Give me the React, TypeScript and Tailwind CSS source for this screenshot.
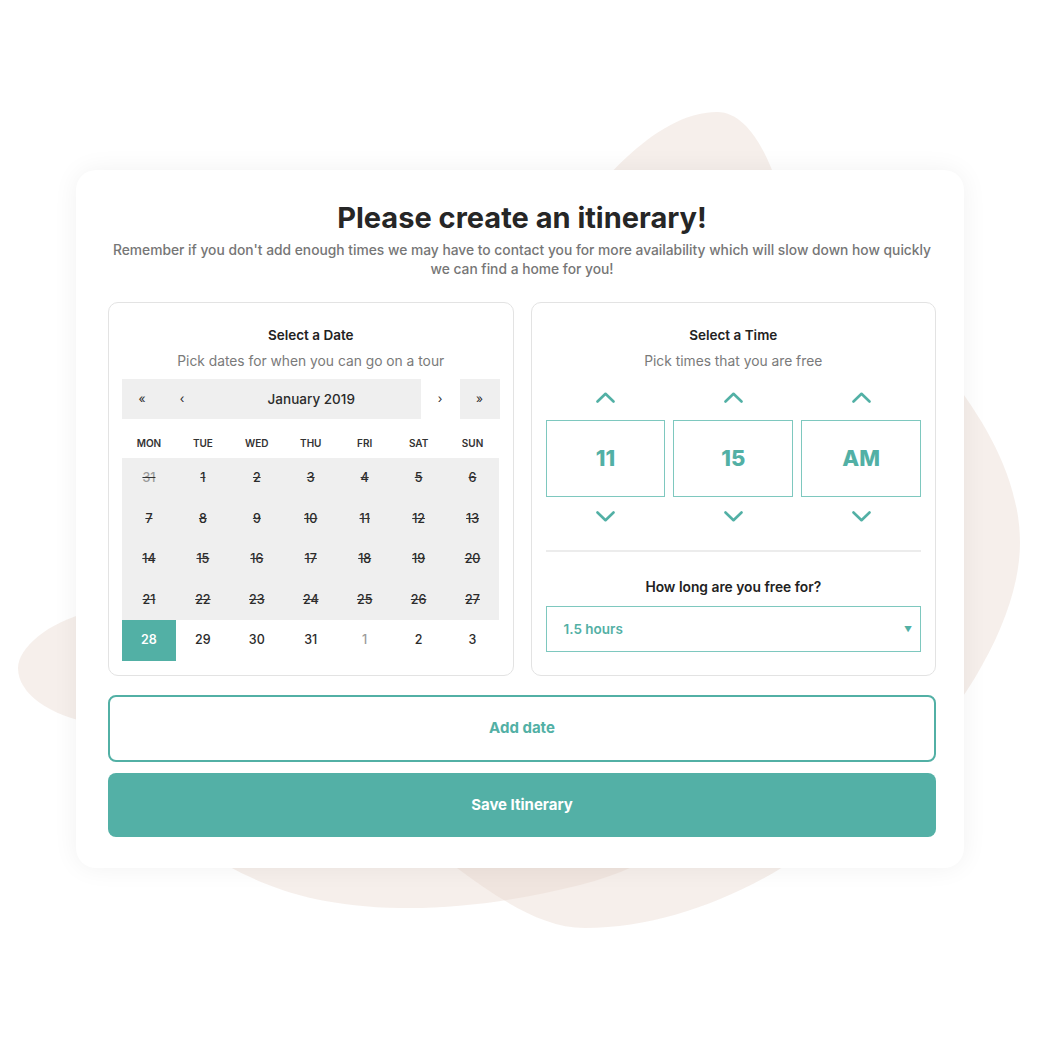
import { useState } from "react";

const TEAL = "#52b0a5";

type Day = { n: number; muted?: boolean; struck?: boolean };

const WEEKDAYS = ["MON", "TUE", "WED", "THU", "FRI", "SAT", "SUN"];

// January 2019, weeks starting on monday
const DAYS: Day[] = [
  { n: 31, muted: true, struck: true },
  ...Array.from({ length: 27 }, (_, i) => ({ n: i + 1, struck: true })),
  { n: 28 },
  { n: 29 },
  { n: 30 },
  { n: 31 },
  { n: 1, muted: true },
  { n: 2 },
  { n: 3 },
];

function Chevron({ up }: { up?: boolean }) {
  return (
    <svg width="19" height="11" viewBox="0 0 19 11" fill="none">
      <polyline
        points={up ? "1.5,9.5 9.5,1.8 17.5,9.5" : "1.5,1.5 9.5,9.2 17.5,1.5"}
        stroke={TEAL}
        strokeWidth="2.6"
        strokeLinecap="round"
        strokeLinejoin="round"
      />
    </svg>
  );
}

function Blobs() {
  return (
    <svg className="absolute inset-0" width="1040" height="1040" viewBox="0 0 1040 1040">
      <g fill="#e8d6cc" fillOpacity="0.4">
        {/* left lobe + bottom sweep */}
        <path d="M 90 612 C 48 622 18 648 18 668 C 18 694 50 716 95 724 L 240 724 L 240 600 Z" />
        <path d="M 200 850 C 250 880 300 906 400 908 C 460 909 520 900 580 885 C 620 875 650 860 680 840 L 680 700 L 200 700 Z" />
        {/* right blob */}
        <path d="M 717 112 C 742 112 760 140 772 170 C 820 260 1020 390 1020 543 C 1020 690 800 928 585 928 C 540 928 495 896 457 868 L 520 300 C 560 230 640 112 717 112 Z" />
      </g>
    </svg>
  );
}

function Calendar() {
  const [selected, setSelected] = useState(28);
  return (
    <div>
      <div className="mt-2 flex h-10 text-[13.5px] text-[#2b2b2b]">
        <button className="w-10 bg-[#efefef] text-[12px]">«</button>
        <button className="w-10 bg-[#efefef] text-[12px]">‹</button>
        <div className="flex flex-1 items-center justify-center bg-[#efefef] font-medium">January 2019</div>
        <button className="w-[39px] bg-white text-[12px]">›</button>
        <button className="w-10 bg-[#efefef] text-[12px]">»</button>
      </div>
      <div className="grid h-[39px] grid-cols-7 pt-[18px]">
        {WEEKDAYS.map((d) => (
          <div key={d} className="text-center text-[10px] font-semibold leading-3 text-[#333]">
            {d}
          </div>
        ))}
      </div>
      <div className="grid grid-cols-7">
        {DAYS.map((d, i) => {
          const isSel = i >= 28 && d.n === selected && !d.muted;
          return (
            <button
              key={i}
              onClick={() => !d.struck && !d.muted && setSelected(d.n)}
              className={`flex h-[40.6px] items-center justify-center text-[12.5px] font-medium ${
                isSel
                  ? "bg-[#52b0a5] font-semibold text-white"
                  : d.struck
                  ? "bg-[#efefef] line-through decoration-[#333]"
                  : "bg-white"
              } ${!isSel && d.muted ? "text-[#9a9a9a]" : isSel ? "" : "text-[#2b2b2b]"}`}
            >
              {d.n}
            </button>
          );
        })}
      </div>
    </div>
  );
}

function TimePicker() {
  const cols = ["11", "15", "AM"];
  return (
    <div className="mt-4 grid grid-cols-3 gap-2">
      {cols.map((c) => (
        <div key={c} className="flex flex-col items-center">
          <div className="flex h-5 items-center">
            <Chevron up />
          </div>
          <div className="mt-[13px] flex h-[77px] w-full items-center justify-center border border-[#7ec8bf] text-[22px] font-extrabold text-[#52b0a5]">
            {c}
          </div>
          <div className="mt-[9px] flex h-5 items-center">
            <Chevron />
          </div>
        </div>
      ))}
    </div>
  );
}

export default function App() {
  return (
    <div
      className="relative h-[1040px] w-[1040px] overflow-hidden bg-white"
      style={{ fontFamily: "Inter, 'Open Sans', sans-serif" }}
    >
      <Blobs />
      <div className="relative ml-[76px] mt-[170px] w-[888px] rounded-[20px] bg-white pb-[31px] pl-8 pr-7 pt-[30px] shadow-[0_0_26px_rgba(0,0,0,0.06)]">
        <h1 className="text-center text-[29px] font-bold leading-9 text-[#262626]">Please create an itinerary!</h1>
        <p className="mx-auto mt-[5px] text-center text-[13.8px] font-medium leading-[19px] text-[#767676]">
          Remember if you don't add enough times we may have to contact you for more availability which will slow
          down how quickly
          <br />
          we can find a home for you!
        </p>

        <div className="mt-[23px] grid grid-cols-2 gap-[17px]">
          <div className="rounded-[10px] border border-[#e3e3e3] px-[13px] pb-[14px] pt-[22px]">
            <h2 className="text-center text-[13.5px] font-semibold leading-5 text-[#222]">Select a Date</h2>
            <p className="mt-[6px] text-center text-[13.8px] leading-5 text-[#7a7a7a]">
              Pick dates for when you can go on a tour
            </p>
            <Calendar />
          </div>

          <div className="rounded-[10px] border border-[#e3e3e3] px-[14px] pb-[23px] pt-[22px]">
            <h2 className="text-center text-[13.5px] font-semibold leading-5 text-[#222]">Select a Time</h2>
            <p className="mt-[6px] text-center text-[13.8px] leading-5 text-[#7a7a7a]">
              Pick times that you are free
            </p>
            <TimePicker />
            <div className="mt-6 h-[2px] bg-[#ececec]" />
            <h3 className="mt-[25px] text-center text-[13.8px] font-semibold leading-5 text-[#222]">
              How long are you free for?
            </h3>
            <div className="mt-[9px] flex h-[46px] items-center justify-between border border-[#7ec8bf] pl-[17px] pr-[8px]">
              <span className="text-[13.5px] font-semibold text-[#52b0a5]">1.5 hours</span>
              <span className="text-[8px] text-[#52b0a5]">▼</span>
            </div>
          </div>
        </div>

        <button className="mt-[19px] flex h-[67px] w-full items-center justify-center rounded-lg border-2 border-[#52b0a5] bg-white text-[15px] font-bold text-[#52b0a5]">
          Add date
        </button>
        <button className="mt-[11px] flex h-16 w-full items-center justify-center rounded-lg bg-[#53b0a6] text-[15px] font-bold text-white">
          Save Itinerary
        </button>
      </div>
    </div>
  );
}
